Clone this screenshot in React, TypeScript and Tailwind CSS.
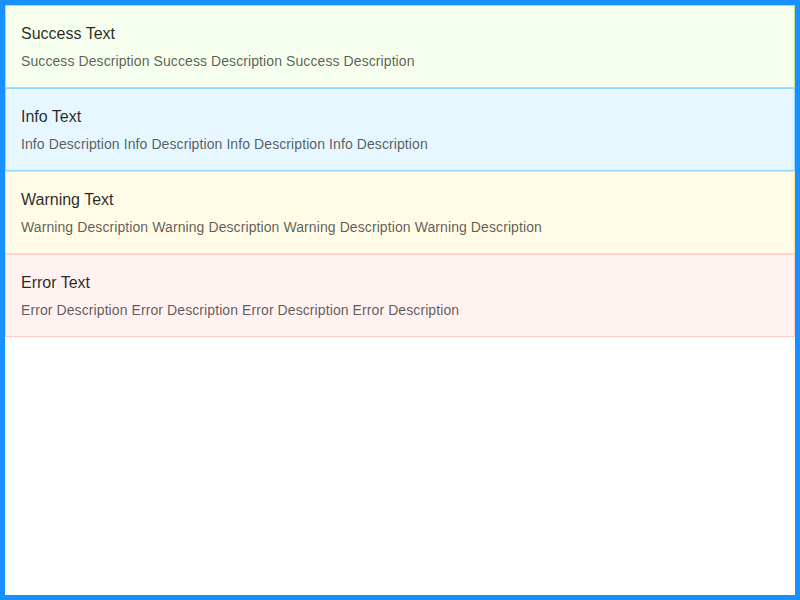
const alerts = [
  {
    title: "Success Text",
    desc: "Success Description Success Description Success Description",
    cls: "bg-[#f6ffed] border-[#b7eb8f]",
  },
  {
    title: "Info Text",
    desc: "Info Description Info Description Info Description Info Description",
    cls: "bg-[#e6f7ff] border-[#91d5ff]",
  },
  {
    title: "Warning Text",
    desc: "Warning Description Warning Description Warning Description Warning Description",
    cls: "bg-[#fffbe6] border-[#ffe58f]",
  },
  {
    title: "Error Text",
    desc: "Error Description Error Description Error Description Error Description",
    cls: "bg-[#fff2f0] border-[#ffccc7]",
  },
];

function Alert({ title, desc, cls }: { title: string; desc: string; cls: string }) {
  return (
    <div className={`border px-[15px] py-[15px] ${cls}`}>
      <div className="text-[16px] leading-[25px] mb-1 text-[rgba(0,0,0,0.85)]">{title}</div>
      <div className="text-[14px] leading-[22px] tracking-[0.09px] text-[rgba(0,0,0,0.65)]">{desc}</div>
    </div>
  );
}

export default function App() {
  return (
    <div className="h-[600px] w-[800px] border-[5px] border-[#1890ff] bg-white font-['Liberation_Sans',Arial,sans-serif]">
      <div className="flex flex-col">
        {alerts.map((a) => (
          <Alert key={a.title} {...a} />
        ))}
      </div>
    </div>
  );
}
